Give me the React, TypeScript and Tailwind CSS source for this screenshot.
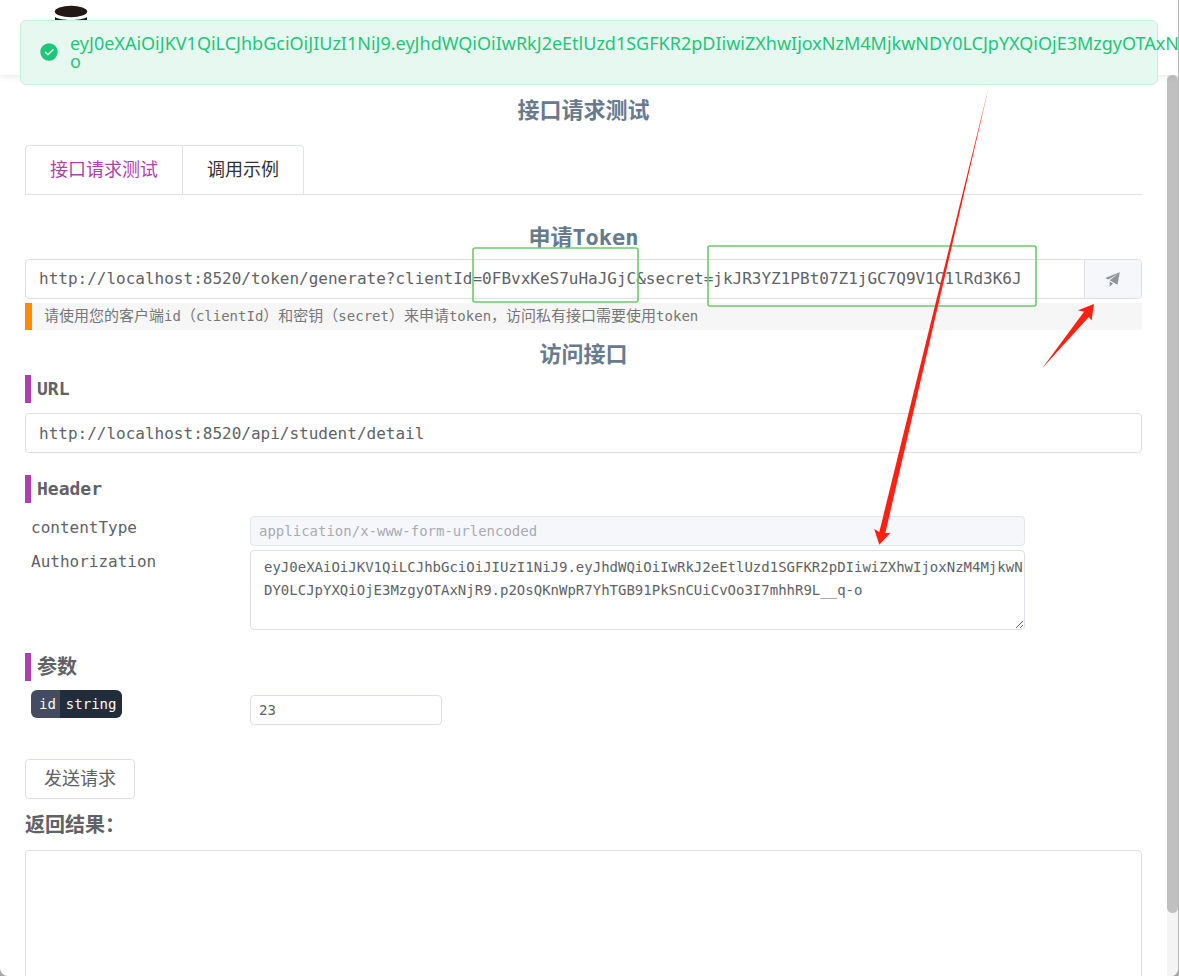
import React from 'react';

const TOKEN =
  'eyJ0eXAiOiJKV1QiLCJhbGciOiJIUzI1NiJ9.eyJhdWQiOiIwRkJ2eEtlUzd1SGFKR2pDIiwiZXhwIjoxNzM4MjkwNDY0LCJpYXQiOjE3MzgyOTAxNjR9.p2OsQKnWpR7YhTGB91PkSnCUiCvOo3I7mhhR9L__q-o';

const PageTitle: React.FC<{ className?: string; children: React.ReactNode }> = ({ className = '', children }) => (
  <h2 className={`text-center text-[22px] leading-[30px] font-bold text-[#677a8e] ${className}`}>{children}</h2>
);

const SectionTitle: React.FC<{ className?: string; children: React.ReactNode }> = ({ className = '', children }) => (
  <h3 className={`border-l-6 border-[#b03fae] pl-1.5 leading-7 font-bold ${className}`}>{children}</h3>
);

const SuccessMessage: React.FC = () => (
  <div
    role="alert"
    className="absolute inset-x-5 top-5 z-20 flex h-[65px] items-center gap-[11px] rounded-md border border-[#c8f0de] bg-[#e7f8f0] pb-0.5 pl-[18px] text-[#1dc779]"
  >
    <svg viewBox="0 0 1024 1024" className="size-5 shrink-0" fill="currentColor" aria-hidden="true">
      <path d="M512 64a448 448 0 1 1 0 896 448 448 0 0 1 0-896zm-55.808 536.384-99.52-99.584a38.4 38.4 0 1 0-54.336 54.336l126.72 126.72a38.272 38.272 0 0 0 54.336 0l262.4-262.464a38.4 38.4 0 1 0-54.272-54.336L456.192 600.384z" />
    </svg>
    <p className="font-['Noto_Sans','Open_Sans',sans-serif] text-lg leading-[18px] whitespace-nowrap">
      {TOKEN.slice(0, -1)}
      <br />
      {TOKEN.slice(-1)}
    </p>
  </div>
);

// Arrows and frames drawn over the page
const Annotations: React.FC = () => (
  <svg className="pointer-events-none absolute top-0 left-0 z-30" width="1179" height="976" aria-hidden="true">
    <g fill="none" stroke="#6ccb6c" strokeWidth="1.6">
      <rect x="473" y="248" width="165" height="54" rx="2" />
      <rect x="708" y="246" width="328" height="60" rx="2" />
    </g>
    <g fill="#ff2012">
      <polygon points="989,86 879.3,532 874.2,529 879.3,544.8 890.5,532.8 885.3,533.2" />
      <polygon points="1042,368.5 1084,311.8 1078,310.3 1094,304 1091.6,320.6 1088.8,317" />
    </g>
  </svg>
);

const App: React.FC = () => {
  return (
    <div className="h-screen bg-[#a8a8a8]">
      <div className="relative flex h-full flex-col overflow-hidden rounded-b-lg border-r border-[#b5b5b5] bg-white font-['DejaVu_Sans_Mono','Noto_Sans_CJK_SC',monospace] text-[#606266]">
        <header className="z-10 h-[75px] shrink-0 pl-[54px] shadow-[0_1px_8px_rgba(0,0,0,0.1)]">
          <svg width="34" height="60" viewBox="0 0 34 60" aria-label="logo">
            <path d="M1 17v30c0 8 32 8 32 0V17c-5 4-27 4-32 0z" fill="#231815" />
            <ellipse cx="17" cy="11.5" rx="16.2" ry="5.7" fill="#231815" />
          </svg>
        </header>

        <SuccessMessage />

        <div className="flex min-h-0 flex-1">
          <main className="min-w-0 flex-1 overflow-hidden px-[25px] pt-[21px]">
            <PageTitle>接口请求测试</PageTitle>

            <div role="tablist" className="mt-[19px] flex h-[50px] border-b border-[#dfe2ea] text-lg">
              <button
                type="button"
                role="tab"
                aria-selected="true"
                className="rounded-tl border-t border-l border-[#dfe2ea] px-6 text-[#b03fae]"
              >
                接口请求测试
              </button>
              <button
                type="button"
                role="tab"
                aria-selected="false"
                className="rounded-tr border-x border-t border-[#dfe2ea] px-6 text-[#303133]"
              >
                调用示例
              </button>
            </div>

            <PageTitle className="mt-7">申请Token</PageTitle>
            <div className="mt-1.5 flex h-10 rounded border border-[#dcdfe6]">
              <input
                aria-label="Token URL"
                className="min-w-0 flex-1 px-[13px] text-base outline-none"
                defaultValue="http://localhost:8520/token/generate?clientId=0FBvxKeS7uHaJGjC&secret=jkJR3YZ1PBt07Z1jGC7Q9V1C1lRd3K6J"
              />
              <button
                type="button"
                aria-label="发送"
                className="flex w-[57px] items-center justify-center rounded-r border-l border-[#dcdfe6] bg-[#f5f7fa] text-[#909399]"
              >
                <svg viewBox="0 0 1024 1024" className="size-[18px]" fill="currentColor" aria-hidden="true">
                  <path d="m64 448 832-320-128 704-446.08-243.328L832 192 242.816 545.536 64 448zm256 512V657.024L512 768 320 960z" />
                </svg>
              </button>
            </div>
            <p className="mt-1 border-l-7 border-[#fb8c00] bg-[#f6f6f6] pl-3 text-[15px] leading-[27px] text-[#777]">
              请使用您的客户端<span className="text-sm">id</span>（<span className="text-sm">clientId</span>）和密钥（
              <span className="text-sm">secret</span>）来申请<span className="text-sm">token</span>
              ，访问私有接口需要使用<span className="text-sm">token</span>
            </p>

            <PageTitle className="mt-2.5">访问接口</PageTitle>
            <SectionTitle className="mt-[5px] text-lg">URL</SectionTitle>
            <input
              aria-label="URL"
              className="mt-2.5 block h-10 w-full rounded border border-[#dcdfe6] px-[13px] text-base outline-none"
              defaultValue="http://localhost:8520/api/student/detail"
            />

            <SectionTitle className="mt-[22px] text-lg">Header</SectionTitle>
            <div className="mt-[13px] grid grid-cols-[225px_minmax(0,775px)] gap-y-1">
              <label htmlFor="content-type" className="pl-1.5 text-base leading-6">
                contentType
              </label>
              <input
                id="content-type"
                disabled
                className="h-[30px] rounded border border-[#e4e7ed] bg-[#f5f7fa] px-2 text-sm text-[#a8abb2]"
                defaultValue="application/x-www-form-urlencoded"
              />
              <label htmlFor="authorization" className="pl-1.5 text-base leading-6">
                Authorization
              </label>
              <textarea
                id="authorization"
                className="block h-20 resize-y rounded border border-[#dcdfe6] py-[5px] pl-[13px] text-sm leading-[23px] break-all outline-none"
                defaultValue={TOKEN}
              />
            </div>

            <SectionTitle className="mt-[23px] text-xl">参数</SectionTitle>
            <div className="mt-[9px] grid h-[35px] grid-cols-[225px_192px]">
              <label htmlFor="param-id" className="flex h-7 items-center pl-1.5 text-sm leading-7 text-[#fffbea]">
                <span className="rounded-l-md bg-[#434c61] pr-1 pl-2">id</span>
                <span className="rounded-r-md bg-[#222d3c] px-1.5">string</span>
              </label>
              <input
                id="param-id"
                className="h-[30px] self-end rounded border border-[#dcdfe6] px-2 text-sm outline-none"
                defaultValue="23"
              />
            </div>

            <button type="button" className="mt-[34px] h-10 rounded border border-[#dcdfe6] px-[18px] text-lg">
              发送请求
            </button>
            <label htmlFor="result" className="mt-3 block text-xl leading-7 font-bold">
              返回结果：
            </label>
            <textarea
              id="result"
              readOnly
              className="mt-[11px] block h-80 w-full resize-none rounded border border-[#dcdfe6] p-3 text-sm outline-none"
            />
          </main>

          {/* Scrollbar */}
          <div className="w-[11px] bg-[#f4f4f4]">
            <div className="h-[93%] rounded-full bg-[#c0c0c0]"></div>
          </div>
        </div>

        <Annotations />
      </div>
    </div>
  );
};

export default App;
